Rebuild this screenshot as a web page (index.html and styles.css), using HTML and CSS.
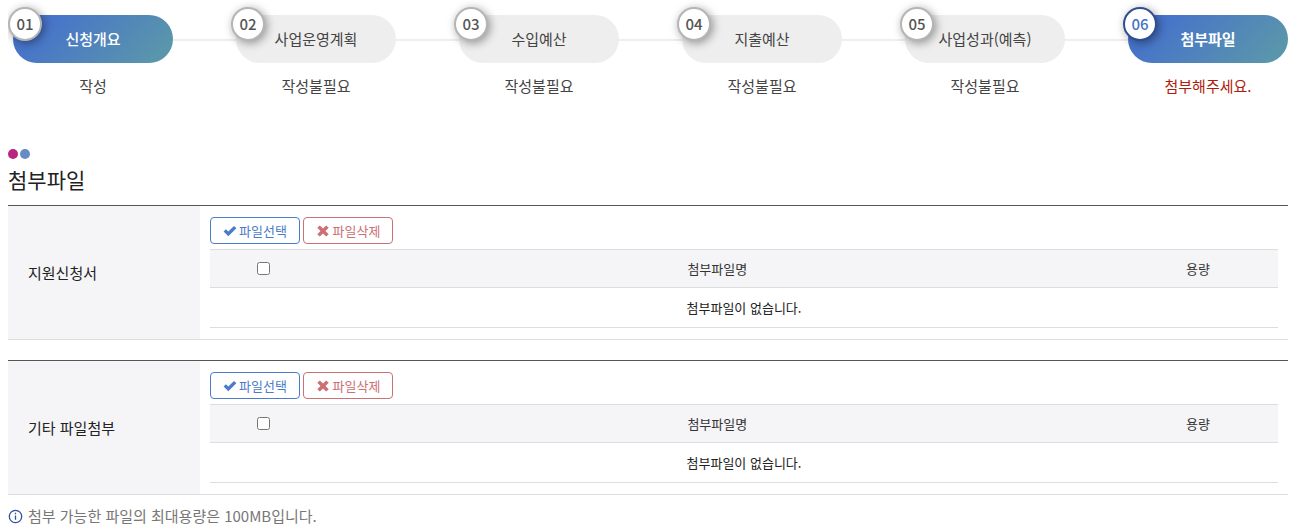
FILE: index.html
```html
<!DOCTYPE html>
<html lang="ko">
<head>
  <meta charset="UTF-8" />
  <title>첨부파일</title>
  <link rel="stylesheet" href="styles.css">
</head>
<body>

<ol class="steps">
  <li class="step done">
    <div class="step-pill"><span class="step-num">01</span>신청개요</div>
    <p class="step-status">작성</p>
  </li>
  <li class="step">
    <div class="step-pill"><span class="step-num">02</span>사업운영계획</div>
    <p class="step-status">작성불필요</p>
  </li>
  <li class="step">
    <div class="step-pill"><span class="step-num">03</span>수입예산</div>
    <p class="step-status">작성불필요</p>
  </li>
  <li class="step">
    <div class="step-pill"><span class="step-num">04</span>지출예산</div>
    <p class="step-status">작성불필요</p>
  </li>
  <li class="step">
    <div class="step-pill"><span class="step-num">05</span>사업성과(예측)</div>
    <p class="step-status">작성불필요</p>
  </li>
  <li class="step current">
    <div class="step-pill"><span class="step-num">06</span>첨부파일</div>
    <p class="step-status">첨부해주세요.</p>
  </li>
</ol>

<div class="title-dots"><span class="dot pink"></span><span class="dot blue"></span></div>
<h1 class="title">첨부파일</h1>

<table class="form-table">
  <tr>
    <th scope="row">지원신청서</th>
    <td>
      <div class="buttons">
        <button type="button" class="btn btn-select">
          <svg class="icon" viewBox="0 0 14 12"><path d="M0.6 6.6 L2.9 4.3 L5.3 6.6 L11 0.9 L13.4 3.2 L5.3 11.3 Z" /></svg>파일선택
        </button>
        <button type="button" class="btn btn-delete">
          <svg class="icon" viewBox="0 0 14 12"><path d="M3.8 0.4 L7 3.5 L10.2 0.4 L12.7 2.8 L9.5 6 L12.7 9.2 L10.2 11.6 L7 8.5 L3.8 11.6 L1.3 9.2 L4.5 6 L1.3 2.8 Z" /></svg>파일삭제
        </button>
      </div>
      <table class="file-table">
        <thead>
          <tr>
            <th class="col-check"><input type="checkbox" aria-label="전체 선택" /></th>
            <th class="col-name">첨부파일명</th>
            <th class="col-size">용량</th>
          </tr>
        </thead>
        <tbody>
          <tr><td colspan="3">첨부파일이 없습니다.</td></tr>
        </tbody>
      </table>
    </td>
  </tr>
</table>

<table class="form-table">
  <tr>
    <th scope="row">기타 파일첨부</th>
    <td>
      <div class="buttons">
        <button type="button" class="btn btn-select">
          <svg class="icon" viewBox="0 0 14 12"><path d="M0.6 6.6 L2.9 4.3 L5.3 6.6 L11 0.9 L13.4 3.2 L5.3 11.3 Z" /></svg>파일선택
        </button>
        <button type="button" class="btn btn-delete">
          <svg class="icon" viewBox="0 0 14 12"><path d="M3.8 0.4 L7 3.5 L10.2 0.4 L12.7 2.8 L9.5 6 L12.7 9.2 L10.2 11.6 L7 8.5 L3.8 11.6 L1.3 9.2 L4.5 6 L1.3 2.8 Z" /></svg>파일삭제
        </button>
      </div>
      <table class="file-table">
        <thead>
          <tr>
            <th class="col-check"><input type="checkbox" aria-label="전체 선택" /></th>
            <th class="col-name">첨부파일명</th>
            <th class="col-size">용량</th>
          </tr>
        </thead>
        <tbody>
          <tr><td colspan="3">첨부파일이 없습니다.</td></tr>
        </tbody>
      </table>
    </td>
  </tr>
</table>

<p class="notice">
  <svg class="notice-icon" viewBox="0 0 14 14"><circle cx="7" cy="7" r="5.8" /><path d="M7 6 V10 M7 3.6 V4.9" /></svg>
  첨부 가능한 파일의 최대용량은 100MB입니다.
</p>

</body>
</html>
```
FILE: styles.css
```css
* {
  box-sizing: border-box;
}

body {
  margin: 0 10px 0 8px;
  font-family: "Noto Sans CJK KR", sans-serif;
  font-size: 15px;
  line-height: 24px;
  color: #222;
  background: #fff;
}

/* steps */
.steps {
  display: flex;
  justify-content: space-between;
  margin: 0;
  padding: 15px 0 0 5px;
  list-style: none;
  background: linear-gradient(#eee, #eee) no-repeat right 39px / 98% 2px;
}

.step {
  width: 160px;
  text-align: center;
  color: #444;
}

.step-pill {
  position: relative;
  height: 48px;
  line-height: 48px;
  border-radius: 24px;
  background: #eee;
}

.step-num {
  position: absolute;
  left: -5px;
  top: -8px;
  width: 34px;
  height: 34px;
  line-height: 30px;
  border: 2px solid #b5b5b5;
  border-radius: 50%;
  background: #fff;
  color: #555;
  font-weight: 500;
  box-shadow: 2px 2px 10px rgba(0, 0, 0, 0.4);
}

.step-status {
  margin: 11px 0 0;
}

.done .step-pill,
.current .step-pill {
  background: linear-gradient(135deg, #4774c9 20%, #5a96ab 90%);
  color: #fff;
  font-weight: 500;
}

.current .step-pill {
  font-weight: 700;
}

.current .step-num {
  border-color: #2d4f91;
  color: #4672c4;
}

.current .step-status {
  color: #b01c0c;
}

/* title */
.title-dots {
  display: flex;
  gap: 2px;
  margin-top: 51px;
}

.dot {
  width: 10px;
  height: 10px;
  border-radius: 50%;
}

.dot.pink {
  background: #b9257f;
}

.dot.blue {
  background: #668bc7;
}

.title {
  margin: 5px 0 11px;
  font-size: 21px;
  line-height: 30px;
  font-weight: 400;
}

/* tables */
table {
  width: 100%;
  border-collapse: separate;
  border-spacing: 0;
  table-layout: fixed;
}

th {
  font-weight: 400;
}

.form-table {
  margin-bottom: 20px;
  border-top: 1px solid #555;
  border-bottom: 1px solid #ddd;
}

.form-table > tbody > tr > th {
  width: 15%;
  padding: 0 20px;
  background: #f5f5f8;
  text-align: left;
}

.form-table > tbody > tr > td {
  padding: 11px 10px;
}

.buttons {
  display: flex;
  gap: 3px;
  margin-bottom: 5px;
}

.btn {
  display: flex;
  align-items: center;
  justify-content: center;
  gap: 2px;
  width: 90px;
  height: 27px;
  padding: 0;
  border: 1px solid;
  border-radius: 4px;
  background: #fff;
  font-family: inherit;
  font-size: 13px;
  cursor: pointer;
}

.btn-select {
  color: #4c7cc9;
}

.btn-delete {
  gap: 3px;
  color: #cc7073;
}

.icon {
  width: 14px;
  height: 12px;
  fill: currentColor;
}

.file-table {
  border-top: 1px solid #ddd;
  font-size: 13px;
  text-align: center;
}

.file-table th,
.file-table td {
  height: 38px;
  padding: 0;
  border-bottom: 1px solid #ddd;
}

.file-table th {
  background: #f5f5f8;
  color: #333;
}

.file-table td {
  height: 40px;
}

.file-table input {
  display: block;
  margin: 0 auto;
}

.col-check {
  width: 10%;
}

.col-size {
  width: 15%;
}

/* notice */
.notice {
  display: flex;
  align-items: center;
  gap: 5px;
  margin: -11px 0 0;
  color: #777;
}

.notice-icon {
  width: 15px;
  height: 15px;
  fill: none;
  stroke: #2d4f9c;
  stroke-width: 1.2;
}
```
